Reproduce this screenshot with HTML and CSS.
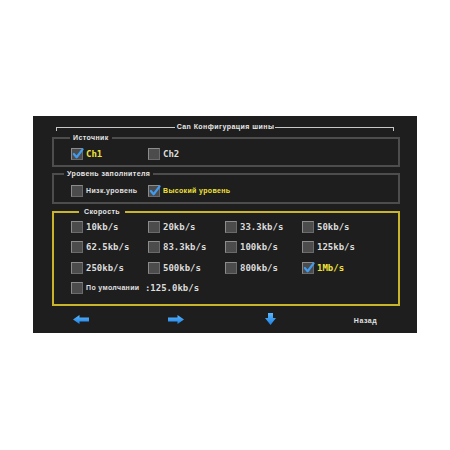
FILE: index.html
```html
<!DOCTYPE html>
<html>
<head>
<meta charset="utf-8">
<link rel="stylesheet" href="styles.css">
</head>
<body>
<div class="screen">
  <div class="title-row">
    <span class="seg seg-left"></span>
    <span class="title">Can Конфигурация шины</span>
    <span class="seg seg-right"></span>
  </div>

  <fieldset class="group g1">
    <legend class="legend lg1">Источник</legend>
    <div class="opts">
      <label class="opt"><span class="cb"><svg class="chk" viewBox="0 0 13 13"><path d="M2 6.5 L5 10 L11.5 1.5"/></svg></span><span class="mono yellow">Ch1</span></label>
      <label class="opt"><span class="cb"></span><span class="mono">Ch2</span></label>
    </div>
  </fieldset>

  <fieldset class="group g2">
    <legend class="legend lg2">Уровень заполнителя</legend>
    <div class="opts">
      <label class="opt"><span class="cb"></span><span class="small">Низк.уровень</span></label>
      <label class="opt"><span class="cb"><svg class="chk" viewBox="0 0 13 13"><path d="M2 6.5 L5 10 L11.5 1.5"/></svg></span><span class="small yellow">Высокий уровень</span></label>
    </div>
  </fieldset>

  <fieldset class="group g3">
    <legend class="legend lg3">Скорость</legend>
    <div class="speeds">
      <label class="opt"><span class="cb"></span><span class="mono">10kb/s</span></label>
      <label class="opt"><span class="cb"></span><span class="mono">20kb/s</span></label>
      <label class="opt"><span class="cb"></span><span class="mono">33.3kb/s</span></label>
      <label class="opt"><span class="cb"></span><span class="mono">50kb/s</span></label>
      <label class="opt"><span class="cb"></span><span class="mono">62.5kb/s</span></label>
      <label class="opt"><span class="cb"></span><span class="mono">83.3kb/s</span></label>
      <label class="opt"><span class="cb"></span><span class="mono">100kb/s</span></label>
      <label class="opt"><span class="cb"></span><span class="mono">125kb/s</span></label>
      <label class="opt"><span class="cb"></span><span class="mono">250kb/s</span></label>
      <label class="opt"><span class="cb"></span><span class="mono">500kb/s</span></label>
      <label class="opt"><span class="cb"></span><span class="mono">800kb/s</span></label>
      <label class="opt"><span class="cb"><svg class="chk" viewBox="0 0 13 13"><path d="M2 6.5 L5 10 L11.5 1.5"/></svg></span><span class="mono yellow">1Mb/s</span></label>
      <label class="opt wide"><span class="cb"></span><span class="small">По умолчании</span><span class="mono">&nbsp;:125.0kb/s</span></label>
    </div>
  </fieldset>

  <div class="nav">
    <span class="nav-cell"><svg width="16" height="9" viewBox="0 0 16 9"><defs><linearGradient id="ga" x1="0" y1="0" x2="0" y2="1"><stop offset="0" stop-color="#5ab8ff"/><stop offset="1" stop-color="#1f7fe0"/></linearGradient></defs><polygon fill="url(#ga)" points="0,4.5 6.5,0 6.5,2.5 16,2.5 16,6.5 6.5,6.5 6.5,9"/></svg></span>
    <span class="nav-cell"><svg width="16" height="9" viewBox="0 0 16 9"><polygon fill="url(#ga)" points="16,4.5 9.5,0 9.5,2.5 0,2.5 0,6.5 9.5,6.5 9.5,9"/></svg></span>
    <span class="nav-cell"><svg width="11" height="12" viewBox="0 0 11 12"><polygon fill="url(#ga)" points="3,0 8,0 8,5 11,5 5.5,12 0,5 3,5"/></svg></span>
    <span class="nav-cell back">Назад</span>
  </div>
</div>
</body>
</html>
```

FILE: styles.css
```css
body {
  margin: 0;
  background: #ffffff;
}

.screen {
  margin: 116px 0 0 33px;
  width: 384px;
  height: 217px;
  box-sizing: border-box;
  background: #1e1e1e;
  padding: 6px 17px 0 19px;
  font-family: "Liberation Sans", Arial, sans-serif;
  color: #e2e2e2;
}

.title-row {
  display: flex;
  align-items: flex-start;
  height: 10px;
  margin: 0 6px 0 4px;
}

.seg {
  flex: 1;
  height: 3px;
  margin-top: 5px;
  border-top: 1px solid #c8c8c8;
}

.seg-left {
  border-left: 1px solid #c8c8c8;
}

.seg-right {
  border-right: 1px solid #c8c8c8;
}

.title {
  font-size: 7px;
  font-weight: bold;
  line-height: 10px;
  letter-spacing: 0.45px;
  padding: 0 1px 0 2px;
  color: #e8e8e8;
}

.group {
  margin: 0;
  padding: 0 0 0 17px;
  border: 2px solid #4d4d4d;
  min-width: 0;
}

.legend {
  font-size: 7px;
  font-weight: bold;
  line-height: 10px;
  letter-spacing: 0.4px;
  padding: 0 3px;
  color: #e6e6e6;
}

.g1 {
  margin-top: 1px;
  padding-top: 5px;
  padding-bottom: 5px;
}

.lg1 {
  margin-left: -1px;
}

.g2 {
  margin-top: 2px;
  padding-top: 6px;
  padding-bottom: 5px;
}

.lg2 {
  margin-left: -7px;
}

.g3 {
  margin-top: 3px;
  padding-top: 4px;
  padding-bottom: 10px;
  border-color: #c9b52c;
}

.lg3 {
  margin-left: 8px;
  padding: 0 5px;
}

.opts {
  display: grid;
  grid-template-columns: 77px 77px;
}

.speeds {
  display: grid;
  grid-template-columns: repeat(4, 77px);
  row-gap: 8.4px;
}

.opt {
  display: flex;
  align-items: center;
  height: 12px;
  white-space: nowrap;
}

.wide {
  grid-column: 1 / span 4;
}

.cb {
  position: relative;
  flex: none;
  width: 12px;
  height: 12px;
  box-sizing: border-box;
  background: #4c4c4c;
  border: 1px solid #8c8c8c;
  border-right-color: #6a6a6a;
  border-bottom-color: #6a6a6a;
  margin-right: 3px;
}

.chk {
  position: absolute;
  left: 0;
  top: -1px;
  width: 12px;
  height: 12px;
  overflow: visible;
}

.chk path {
  fill: none;
  stroke: #3f9cf0;
  stroke-width: 2.4;
  stroke-linecap: round;
  stroke-linejoin: round;
}

.mono {
  font-family: "DejaVu Sans Mono", "Liberation Mono", monospace;
  font-size: 9px;
  font-weight: bold;
  line-height: 12px;
  color: #dcdcdc;
}

.small {
  font-size: 7px;
  font-weight: bold;
  letter-spacing: 0.35px;
  line-height: 12px;
  color: #e0e0e0;
}

.yellow {
  color: #f2e23a;
}

.nav {
  display: grid;
  grid-template-columns: repeat(4, 95px);
  justify-items: center;
  align-items: center;
  height: 14px;
  margin: 6px 0 0 -19px;
}

.nav-cell {
  display: flex;
  align-items: center;
}

.nav-cell svg {
  display: block;
}

.back {
  font-size: 7px;
  font-weight: bold;
  letter-spacing: 0.5px;
  color: #e0e0e0;
  padding-top: 2px;
}
```
